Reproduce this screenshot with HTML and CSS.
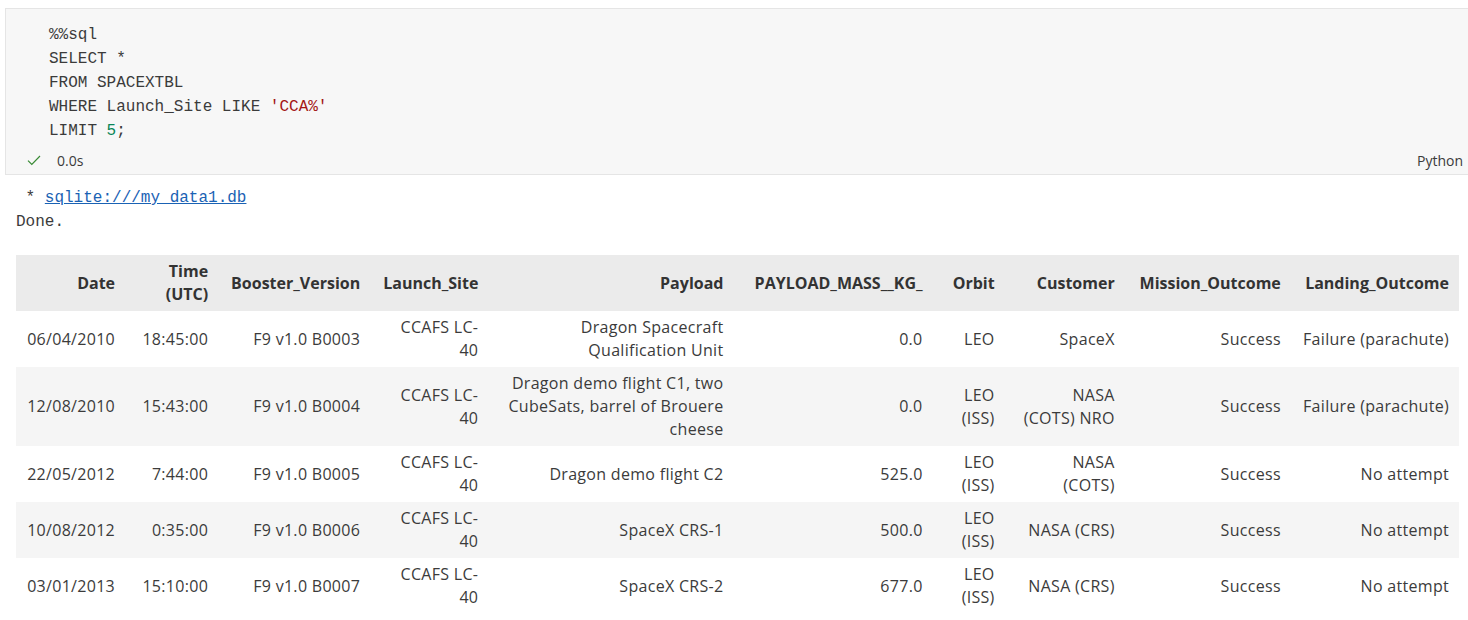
FILE: index.html
```html
<!DOCTYPE html>
<html>
<head>
<meta charset="utf-8">
<link rel="stylesheet" href="styles.css">
</head>
<body>
<div class="cell">
  <pre class="code">%%sql
SELECT *
FROM SPACEXTBL
WHERE Launch_Site LIKE <span class="str">'CCA%'</span>
LIMIT <span class="num">5</span>;</pre>
  <div class="status">
    <svg class="check" width="16" height="16" viewBox="0 0 16 16"><polyline points="2,8.6 5.8,12.4 14,4" fill="none" stroke="#388a34" stroke-width="1.2"/></svg>
    <span class="time">0.0s</span>
    <span class="lang">Python</span>
  </div>
</div>
<div class="output">
  <pre class="text"> * <a href="#" class="link">sqlite:///my_data1.db</a>
Done.</pre>
  <table class="df">
    <colgroup>
      <col class="c1"><col class="c2"><col class="c3"><col class="c4"><col class="c5"><col class="c6"><col class="c7"><col class="c8"><col class="c9"><col class="c10">
    </colgroup>
    <thead>
      <tr><th>Date</th><th>Time (UTC)</th><th>Booster_Version</th><th>Launch_Site</th><th>Payload</th><th>PAYLOAD_MASS__KG_</th><th>Orbit</th><th>Customer</th><th>Mission_Outcome</th><th>Landing_Outcome</th></tr>
    </thead>
    <tbody>
      <tr><td>06/04/2010</td><td>18:45:00</td><td>F9 v1.0 B0003</td><td>CCAFS LC-40</td><td>Dragon Spacecraft Qualification Unit</td><td>0.0</td><td>LEO</td><td>SpaceX</td><td>Success</td><td>Failure (parachute)</td></tr>
      <tr><td>12/08/2010</td><td>15:43:00</td><td>F9 v1.0 B0004</td><td>CCAFS LC-40</td><td>Dragon demo flight C1, two CubeSats, barrel of Brouere cheese</td><td>0.0</td><td>LEO (ISS)</td><td>NASA (COTS) NRO</td><td>Success</td><td>Failure (parachute)</td></tr>
      <tr><td>22/05/2012</td><td>7:44:00</td><td>F9 v1.0 B0005</td><td>CCAFS LC-40</td><td>Dragon demo flight C2</td><td>525.0</td><td>LEO (ISS)</td><td>NASA (COTS)</td><td>Success</td><td>No attempt</td></tr>
      <tr><td>10/08/2012</td><td>0:35:00</td><td>F9 v1.0 B0006</td><td>CCAFS LC-40</td><td>SpaceX CRS-1</td><td>500.0</td><td>LEO (ISS)</td><td>NASA (CRS)</td><td>Success</td><td>No attempt</td></tr>
      <tr><td>03/01/2013</td><td>15:10:00</td><td>F9 v1.0 B0007</td><td>CCAFS LC-40</td><td>SpaceX CRS-2</td><td>677.0</td><td>LEO (ISS)</td><td>NASA (CRS)</td><td>Success</td><td>No attempt</td></tr>
    </tbody>
  </table>
</div>
</body>
</html>
```

FILE: styles.css
```css
html, body {
  margin: 0;
  padding: 0;
  background: #ffffff;
  font-family: "Open Sans", "Noto Sans", sans-serif;
}

.cell {
  margin: 8px 0 0 5px;
  background: #f7f7f7;
  border-top: 1px solid #e5e5e5;
  border-left: 1px solid #e5e5e5;
  border-bottom: 1px solid #e5e5e5;
}

.code {
  margin: 0;
  padding: 14px 0 0 43px;
  font-family: "Liberation Mono", monospace;
  font-size: 16px;
  line-height: 24px;
  color: #3b3b3b;
}

.str { color: #a31515; }
.num { color: #098658; }

.status {
  display: flex;
  align-items: center;
  height: 28px;
  padding: 3px 5px 0 20px;
  font-size: 14px;
  color: #3b3b3b;
}

.check { margin-right: 15px; }

.lang { margin-left: auto; }

.output {
  padding: 11px 0 0 16px;
}

.text {
  margin: 0;
  font-family: "Liberation Mono", monospace;
  font-size: 16px;
  line-height: 24px;
  color: #3b3b3b;
}

.link { color: #1a62b4; }

.df {
  margin-top: 21px;
  width: 1443px;
  table-layout: fixed;
  border-collapse: collapse;
  font-size: 16px;
  line-height: 23px;
  color: #3b3b3b;
}

.df th, .df td {
  padding: 5px 10px;
  text-align: right;
  vertical-align: middle;
}

.df td { letter-spacing: 0.3px; }

.df th {
  background: #ebebeb;
  font-weight: 700;
  color: #333;
}

.df tbody tr:nth-child(even) td { background: #f5f5f5; }

.df td:nth-child(4), .df th:nth-child(4) { padding-left: 13px; }
.df td:nth-child(8), .df th:nth-child(8) { padding-left: 16px; }

.c1 { width: 109px; }
.c2 { width: 93px; }
.c3 { width: 152px; }
.c4 { width: 118px; }
.c5 { width: 245px; }
.c6 { width: 199px; }
.c7 { width: 72px; }
.c8 { width: 120px; }
.c9 { width: 166px; }
.c10 { width: 168px; }
```
